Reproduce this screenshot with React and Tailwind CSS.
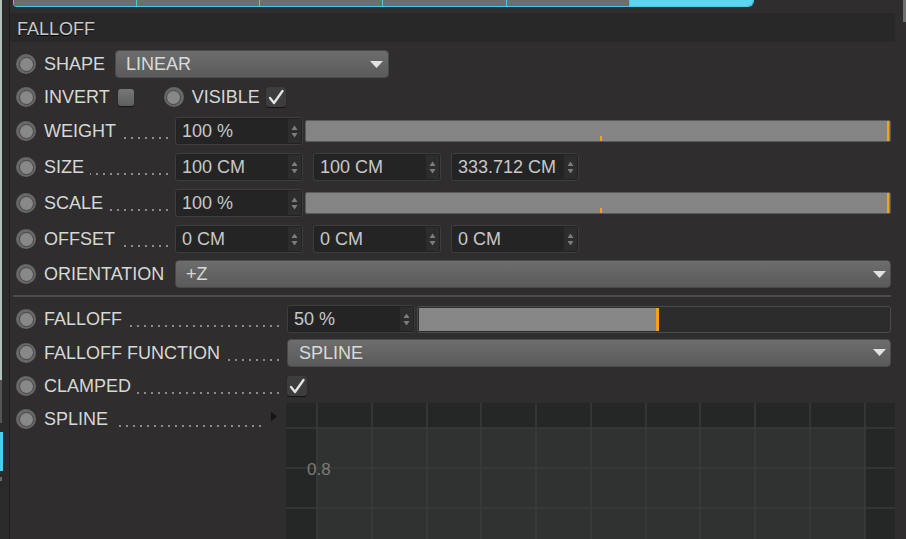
import React from 'react';

function Radio() {
  return (
    <div className="w-[20px] h-[20px] rounded-full bg-[#686868] flex items-center justify-center shrink-0">
      <div className="w-[15px] h-[15px] rounded-full bg-[#888888] border border-[#454545]" />
    </div>
  );
}

function Dots({ mr = 'mr-[7px]' }) {
  return (
    <div
      className={`flex-1 ml-[6px] h-[2px] translate-y-[7px] bg-[linear-gradient(to_left,#8c8c8c_2px,transparent_2px)] bg-[length:7px_2px] bg-repeat-x bg-right ${mr}`}
    />
  );
}

function Spinner() {
  return (
    <svg width="7" height="13" viewBox="0 0 7 13">
      <path d="M3.5 0.5 L6.5 5 L0.5 5Z M0.5 8 L6.5 8 L3.5 12.5Z" fill="#7e7e7e" />
    </svg>
  );
}

function NumInput({ value }) {
  return (
    <div className="w-[128px] h-[28px] rounded-[3px] border border-[#3e3e3e] bg-[#222222] flex p-[1px] shrink-0">
      <div className="flex-1 flex items-center pl-[5px] text-[#c8c8c8] bg-[#242424]">{value}</div>
      <div className="w-[13px] flex items-center justify-center bg-[#2d2d2d]">
        <Spinner />
      </div>
    </div>
  );
}

function Slider() {
  return (
    <div className="flex-1 ml-[2px] h-[22px] bg-[#848484] border border-[#5a5a5a] rounded-[2px] relative">
      <div className="absolute right-[1px] top-0 bottom-0 w-[2px] bg-[#f2a30f]" />
      <div className="absolute left-[294px] bottom-0 h-[5px] w-[2px] bg-[#f2a30f]" />
    </div>
  );
}

function Arrow() {
  return (
    <svg width="13" height="7" viewBox="0 0 13 7">
      <path d="M0 0 H13 L6.5 7Z" fill="#e2e2e2" />
    </svg>
  );
}

function Dropdown({ value, className }) {
  return (
    <div
      className={`h-[28px] rounded-[4px] bg-gradient-to-b from-[#6d6d6d] to-[#5a5a5a] border border-[#4a4a4a] flex items-center justify-between pl-[10px] pr-[4px] text-[#dadada] ${className}`}
    >
      <span>{value}</span>
      <Arrow />
    </div>
  );
}

function Check() {
  return (
    <div className="w-[20px] h-[20px] rounded-[3px] bg-[#3d3d3d] shadow-[0_1px_1px_rgba(0,0,0,0.6)] flex items-center justify-center shrink-0">
      <svg width="18" height="18" viewBox="0 0 18 18">
        <path d="M3 10 L7 15 L15.5 3" stroke="#e4e4e4" strokeWidth="2.3" fill="none" strokeLinecap="round" strokeLinejoin="round" />
      </svg>
    </div>
  );
}

function Label1({ text, dots = true }) {
  return (
    <div className="flex items-center w-[159px] shrink-0 self-stretch">
      <Radio />
      <span className="ml-[8px] text-[#d6d8d6] whitespace-nowrap">{text}</span>
      {dots ? <Dots mr="mr-[7px]" /> : null}
    </div>
  );
}

function Label2({ text }) {
  return (
    <div className="flex items-center w-[271px] shrink-0 self-stretch">
      <Radio />
      <span className="ml-[8px] text-[#d6d8d6] whitespace-nowrap">{text}</span>
      <Dots mr="mr-[8px]" />
    </div>
  );
}

function Graph() {
  const xs = [31, 86, 141, 195, 250, 305, 360, 414, 469, 524, 579];
  const ys = [25, 65, 105];
  return (
    <svg width="609" height="136" viewBox="0 0 609 136" className="block shrink-0">
      <rect x="0" y="0" width="609" height="136" fill="#303231" />
      <rect x="0" y="0" width="609" height="25" fill="#252726" />
      <rect x="0" y="0" width="31" height="136" fill="#252726" />
      <rect x="579" y="0" width="30" height="136" fill="#252726" />
      {xs.map((x) => (
        <line key={x} x1={x} y1="0" x2={x} y2="136" stroke="#373b3b" strokeWidth="1.6" />
      ))}
      {ys.map((y) => (
        <line key={y} x1="0" y1={y} x2="609" y2={y} stroke="#373b3b" strokeWidth="1.6" />
      ))}
      <text x="21" y="72" fill="#7b7b7b" fontSize="17" fontFamily="Liberation Sans, Arial, sans-serif">0.8</text>
    </svg>
  );
}

export default function App() {
  return (
    <div className="w-[906px] h-[539px] overflow-hidden bg-[#2f2d2e] flex font-['Liberation_Sans',Arial,sans-serif] text-[18px] leading-none">
      {/* left strip */}
      <div className="w-[10px] shrink-0 bg-[#2a2a2a] border-r border-[#1e1e1e] flex flex-col">
        <div className="h-[380px] w-[2px] bg-[#b4c0bc] shrink-0" />
        <div className="h-[43px] w-[2px] bg-[#555555] shrink-0" />
        <div className="h-[9px] shrink-0" />
        <div className="h-[39px] w-[3px] bg-[#4ccaf0] shrink-0" />
        <div className="h-[6px] shrink-0" />
        <div className="h-[4px] w-[2px] bg-[#6a6a6a] shrink-0" />
      </div>

      {/* main panel */}
      <div className="w-[885px] shrink-0 flex flex-col overflow-hidden">
        {/* tabs */}
        <div className="h-[13px] shrink-0">
          <div className="ml-[3px] w-[741px] h-[7px] flex border-x border-b border-[#4ec7e2] rounded-bl-[4px] rounded-br-[6px] overflow-hidden">
            <div className="w-[123px] bg-[#6e6e6e] border-r border-[#4ec7e2]" />
            <div className="w-[123px] bg-[#6e6e6e] border-r border-[#4ec7e2]" />
            <div className="w-[123px] bg-[#6e6e6e] border-r border-[#4ec7e2]" />
            <div className="w-[124px] bg-[#6e6e6e] border-r border-[#4ec7e2]" />
            <div className="w-[123px] bg-[#6e6e6e] border-r border-[#4ec7e2]" />
            <div className="flex-1 bg-[#5bd5f2]" />
          </div>
        </div>

        {/* header */}
        <div className="h-[29px] shrink-0 bg-[#282828] flex items-center pl-[7px] pt-[3px] text-[#cacaca] [text-shadow:0_1px_0_#000]">
          FALLOFF
        </div>
        <div className="h-[5px] shrink-0" />

        <div className="flex flex-col pl-[6px] pr-[4px] shrink-0">
          {/* SHAPE */}
          <div className="h-[34px] flex items-center">
            <Radio />
            <span className="ml-[8px] text-[#d6d8d6]">SHAPE</span>
            <Dropdown value="LINEAR" className="ml-[10px] w-[274px] pr-[5px]" />
          </div>

          {/* INVERT / VISIBLE */}
          <div className="h-[32px] flex items-center">
            <Radio />
            <span className="ml-[8px] text-[#d6d8d6]">INVERT</span>
            <div className="ml-[8px] w-[16px] h-[17px] rounded-[3px] bg-gradient-to-b from-[#777777] to-[#5e5e5e] shadow-[0_1px_1px_rgba(0,0,0,0.5)]" />
            <div className="ml-[30px]">
              <Radio />
            </div>
            <span className="ml-[8px] text-[#d6d8d6]">VISIBLE</span>
            <div className="ml-[6px]">
              <Check />
            </div>
          </div>

          {/* WEIGHT */}
          <div className="h-[36px] flex items-center">
            <Label1 text="WEIGHT" />
            <NumInput value="100 %" />
            <Slider />
          </div>

          {/* SIZE */}
          <div className="h-[36px] flex items-center">
            <Label1 text="SIZE" />
            <div className="flex gap-[10px]">
              <NumInput value="100 CM" />
              <NumInput value="100 CM" />
              <NumInput value="333.712 CM" />
            </div>
          </div>

          {/* SCALE */}
          <div className="h-[36px] flex items-center">
            <Label1 text="SCALE" />
            <NumInput value="100 %" />
            <Slider />
          </div>

          {/* OFFSET */}
          <div className="h-[36px] flex items-center">
            <Label1 text="OFFSET" />
            <div className="flex gap-[10px]">
              <NumInput value="0 CM" />
              <NumInput value="0 CM" />
              <NumInput value="0 CM" />
            </div>
          </div>

          {/* ORIENTATION */}
          <div className="h-[34px] flex items-center">
            <Label1 text="ORIENTATION" dots={false} />
            <Dropdown value="+Z" className="flex-1" />
          </div>
        </div>

        {/* separator */}
        <div className="mt-[4px] ml-[3px] mr-[4px] h-[2px] bg-[#4b4b4b] shrink-0" />
        <div className="h-[5px] shrink-0" />

        <div className="flex flex-col pl-[6px] pr-[4px] shrink-0">
          {/* FALLOFF */}
          <div className="h-[34px] flex items-center">
            <Label2 text="FALLOFF" />
            <NumInput value="50 %" />
            <div className="flex-1 ml-[2px] h-[27px] border border-[#4a4a4a] rounded-[3px] bg-[#2c2c2c] p-[1px] flex">
              <div className="w-[237px] bg-[#878787]" />
              <div className="w-[3px] bg-[#f5a40d]" />
            </div>
          </div>

          {/* FALLOFF FUNCTION */}
          <div className="h-[33px] flex items-center">
            <Label2 text="FALLOFF FUNCTION" />
            <Dropdown value="SPLINE" className="flex-1 pl-[11px]" />
          </div>

          {/* CLAMPED */}
          <div className="h-[34px] flex items-center">
            <Label2 text="CLAMPED" />
            <Check />
          </div>

          {/* SPLINE */}
          <div className="flex items-start">
            <div className="flex items-center w-[270px] h-[32px] shrink-0">
              <Radio />
              <span className="ml-[8px] text-[#d6d8d6]">SPLINE</span>
              <Dots mr="mr-[10px]" />
              <svg width="6" height="9" viewBox="0 0 6 9" className="mr-[9px] -translate-y-[3px] shrink-0">
                <path d="M0 0 L6 4.5 L0 9Z" fill="#141414" />
              </svg>
            </div>
            <Graph />
          </div>
        </div>
      </div>

      {/* scrollbar */}
      <div className="flex-1 relative">
        <div className="absolute right-0 top-0 w-[3px] h-[22px] bg-[#707070]" />
      </div>
    </div>
  );
}
